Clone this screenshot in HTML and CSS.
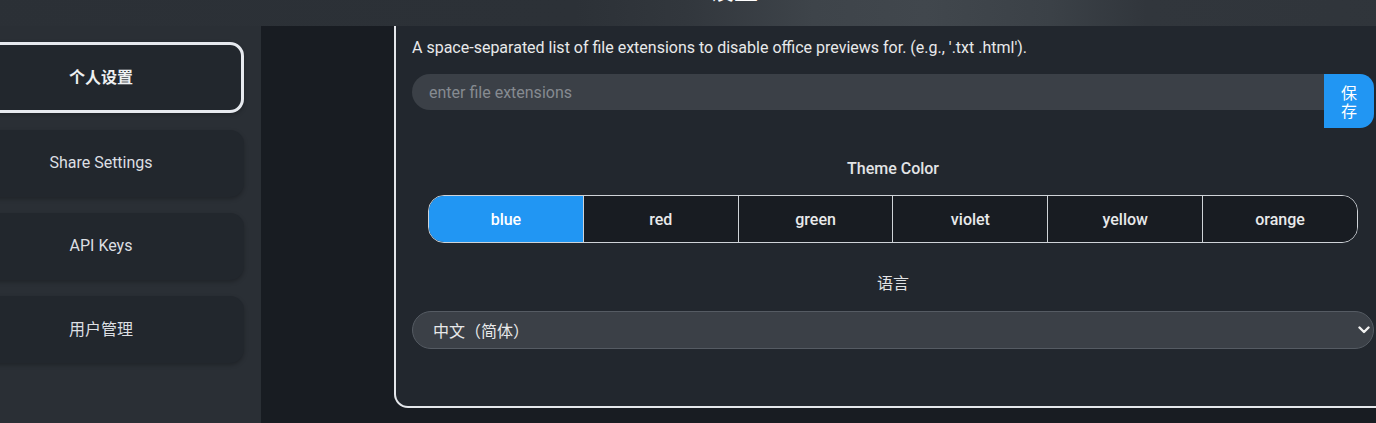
FILE: index.html
```html
<!DOCTYPE html>
<html lang="zh">
<head>
<meta charset="utf-8">
<title>设置</title>
<link rel="stylesheet" href="styles.css">
</head>
<body>
<div class="page">
  <header class="topbar"><h1 class="title">设置</h1></header>
  <div class="layout">
    <nav class="sidebar">
      <button class="nav-btn active">个人设置</button>
      <button class="nav-btn">Share Settings</button>
      <button class="nav-btn">API Keys</button>
      <button class="nav-btn">用户管理</button>
    </nav>
    <main class="content">
      <section class="card">
        <p class="desc">A space-separated list of file extensions to disable office previews for. (e.g., '.txt .html').</p>
        <div class="input-row">
          <input class="ext-input" type="text" placeholder="enter file extensions">
          <button class="save-btn">保存</button>
        </div>
        <h3 class="label label-theme">Theme Color</h3>
        <div class="theme-group">
          <button class="theme-btn selected">blue</button>
          <button class="theme-btn">red</button>
          <button class="theme-btn">green</button>
          <button class="theme-btn">violet</button>
          <button class="theme-btn">yellow</button>
          <button class="theme-btn">orange</button>
        </div>
        <h3 class="label label-lang">语言</h3>
        <div class="select-wrap">
          <select class="lang-select">
            <option>中文（简体）</option>
          </select>
          <svg class="chev" width="12" height="8" viewBox="0 0 12 8"><path d="M1.5 1.5 L6 6 L10.5 1.5" fill="none" stroke="#f2f2f2" stroke-width="2.4" stroke-linecap="round" stroke-linejoin="round"/></svg>
        </div>
      </section>
    </main>
  </div>
</div>
</body>
</html>
```
FILE: styles.css
```css
* { box-sizing: border-box; }
html, body { margin: 0; padding: 0; }
body {
  background: #181c22;
  overflow: hidden;
  height: 423px;
  font-family: Roboto, "Noto Sans CJK SC", sans-serif;
  color: #e6e6e6;
}
.page {
  width: 1586px;
  margin-left: -59px;
}
.topbar {
  height: 26px;
  overflow: hidden;
  background: linear-gradient(90deg, #2b3036 0%, #2c3137 40%, #32373d 47%, #3e444a 55%, #41474d 62%, #3b4147 70%, #31363c 76%, #2f343a 100%);
  text-align: center;
}
.title {
  margin: -23px 0 0;
  font-size: 24px;
  line-height: 28px;
  font-weight: 700;
  color: #ffffff;
}
.layout {
  display: flex;
  height: 397px;
}
.sidebar {
  width: 320px;
  flex: none;
  background: #2a2f35;
  padding: 16px 17px 0;
  display: flex;
  flex-direction: column;
  gap: 16px;
}
.nav-btn {
  height: 67px;
  border: none;
  border-radius: 14px;
  background: #22272d;
  box-shadow: 0 2px 4px rgba(0, 0, 0, 0.25);
  color: #dcdfe3;
  font-family: Roboto, "Noto Sans CJK SC", sans-serif;
  font-size: 16px;
  font-weight: 400;
  display: flex;
  align-items: center;
  justify-content: center;
  padding: 0 0 3px;
}
.nav-btn.active {
  height: 71px;
  border: 3px solid #e6e9ee;
  font-weight: 700;
  font-size: 16px;
  color: #eef0f2;
  margin-bottom: 1px;
}
.content {
  flex: 1;
  background: #181c22;
  padding: 0 133px;
}
.card {
  background: #22272e;
  border: 2px solid #e4e7eb;
  border-top: none;
  border-radius: 0 0 14px 14px;
  padding: 13px 18px 57px 16px;
}
.desc {
  margin: 0;
  font-size: 16px;
  line-height: 18px;
  color: #e8e9ea;
}
.input-row {
  display: flex;
  align-items: flex-start;
  margin-top: 17px;
}
.ext-input {
  flex: 1;
  height: 36px;
  border: none;
  border-radius: 18px 0 0 18px;
  background: #3b4047;
  padding: 0 17px;
  font-family: Roboto, sans-serif;
  font-size: 16px;
  color: #e6e6e6;
  outline: none;
}
.ext-input::placeholder { color: #868b91; }
.save-btn {
  width: 50px;
  height: 54px;
  flex: none;
  border: none;
  border-radius: 0 14px 14px 0;
  background: #2196f3;
  color: #ffffff;
  font-family: "Noto Sans CJK SC", sans-serif;
  font-size: 16px;
  line-height: 18px;
  padding: 0 13px;
}
.label {
  margin: 0;
  text-align: center;
  font-size: 16px;
  line-height: 18px;
  color: #e2e4e6;
}
.label-theme {
  margin-top: 32px;
  font-weight: 500;
}
.label-lang {
  margin-top: 30px;
  font-weight: 400;
  font-size: 16px;
  font-family: "Noto Sans CJK SC", sans-serif;
}
.theme-group {
  display: flex;
  margin: 17px 16px 0;
  height: 48px;
  border: 1px solid #cfd3d8;
  border-radius: 16px;
  overflow: hidden;
}
.theme-btn {
  flex: 1;
  border: none;
  border-right: 1px solid #cfd3d8;
  background: #181c22;
  color: #e8e9ea;
  font-family: Roboto, sans-serif;
  font-size: 16px;
  font-weight: 500;
  padding: 0;
}
.theme-btn:last-child { border-right: none; }
.theme-btn.selected {
  background: #2196f3;
  color: #ffffff;
}
.select-wrap {
  position: relative;
  margin-top: 20px;
}
.lang-select {
  appearance: none;
  -webkit-appearance: none;
  width: 100%;
  height: 38px;
  border: 1px solid #555b63;
  border-radius: 19px;
  background: #3b4047;
  color: #e8e9ea;
  font-family: "Noto Sans CJK SC", sans-serif;
  font-size: 16px;
  padding: 0 20px;
  outline: none;
}
.chev {
  position: absolute;
  right: 4px;
  top: 15px;
}
```
